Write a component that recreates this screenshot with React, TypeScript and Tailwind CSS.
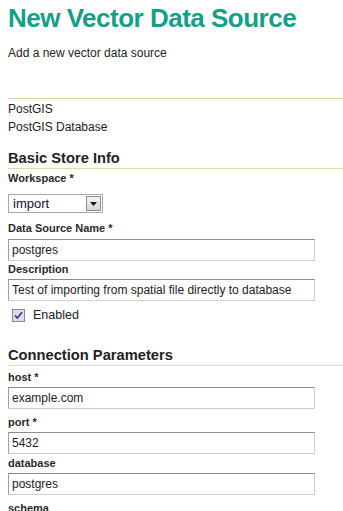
import React from "react";

function Label({ text, className = "" }: { text: string; className?: string }) {
  return (
    <div className={"text-[11px] font-bold leading-[14px] text-[#2a2a2a] " + className}>
      {text}
    </div>
  );
}

function TextInput({ value, className = "" }: { value: string; className?: string }) {
  return (
    <div
      className={
        "w-[307px] h-[22px] border border-t-[#8c8c8c] border-l-[#a0a0a0] border-r-[#cfcfcf] border-b-[#cfcfcf] bg-white pl-[3px] text-[12px] leading-[20px] text-[#222] " +
        className
      }
    >
      {value}
    </div>
  );
}

function Heading({ text, className = "" }: { text: string; className?: string }) {
  return (
    <div
      className={
        "border-b border-[#cfe2aa] text-[14.7px] font-bold leading-[18px] text-[#222] " + className
      }
    >
      {text}
    </div>
  );
}

export default function App() {
  return (
    <div
      className="w-[343px] h-[511px] overflow-hidden bg-white pl-[8px]"
      style={{ fontFamily: '"Liberation Sans", Arial, sans-serif' }}
    >
      <div className="pt-[3px] text-[26px] font-bold leading-[30px] tracking-[-0.5px] text-[#14a087]">
        New Vector Data Source
      </div>
      <div className="mt-[13px] text-[12px] leading-[14px] text-[#222]">
        Add a new vector data source
      </div>
      <div className="mt-[38px] border-t border-[#c3df98]" />
      <div className="mt-[1px] text-[12px] leading-[18px] text-[#222]">
        <div>PostGIS</div>
        <div>PostGIS Database</div>
      </div>

      <Heading text="Basic Store Info" className="mt-[13px] pb-[1px]" />
      <Label text="Workspace *" className="mt-[2px]" />
      <div className="mt-[9px] flex h-[19px] w-[95px] items-center justify-between border border-[#a8a8a8] bg-white pl-[4px] pr-[1px]">
        <span className="text-[13px] leading-[17px] text-[#111133]">import</span>
        <div className="flex h-[15px] w-[15px] items-center justify-center border border-[#8e8e8e] bg-gradient-to-b from-[#f4f4f4] to-[#d6d6d6]">
          <svg width="7" height="4" viewBox="0 0 7 4">
            <path d="M0 0 H7 L3.5 4 Z" fill="#111" />
          </svg>
        </div>
      </div>
      <Label text="Data Source Name *" className="mt-[8px]" />
      <TextInput value="postgres" className="mt-[4px]" />
      <Label text="Description" className="mt-[1px]" />
      <TextInput value="Test of importing from spatial file directly to database" className="mt-[3px]" />
      <div className="mt-[7px] flex items-center pl-[4px]">
        <div className="flex h-[13px] w-[13px] items-center justify-center border border-[#8a8a8a] bg-[#dcdce8]">
          <svg width="9" height="9" viewBox="0 0 9 9">
            <path d="M1 4.5 L3.3 7 L8 1.2" stroke="#2a3a9a" strokeWidth="1.7" fill="none" />
          </svg>
        </div>
        <span className="ml-[8px] text-[12.5px] leading-[15px] text-[#222]">Enabled</span>
      </div>

      <Heading text="Connection Parameters" className="mt-[23px] pb-[1px]" />
      <Label text="host *" className="mt-[4px]" />
      <TextInput value="example.com" className="mt-[3px]" />
      <Label text="port *" className="mt-[6px]" />
      <TextInput value="5432" className="mt-[3px]" />
      <Label text="database" className="mt-[2px]" />
      <TextInput value="postgres" className="mt-[3px]" />
      <Label text="schema" className="mt-[6px]" />
    </div>
  );
}
